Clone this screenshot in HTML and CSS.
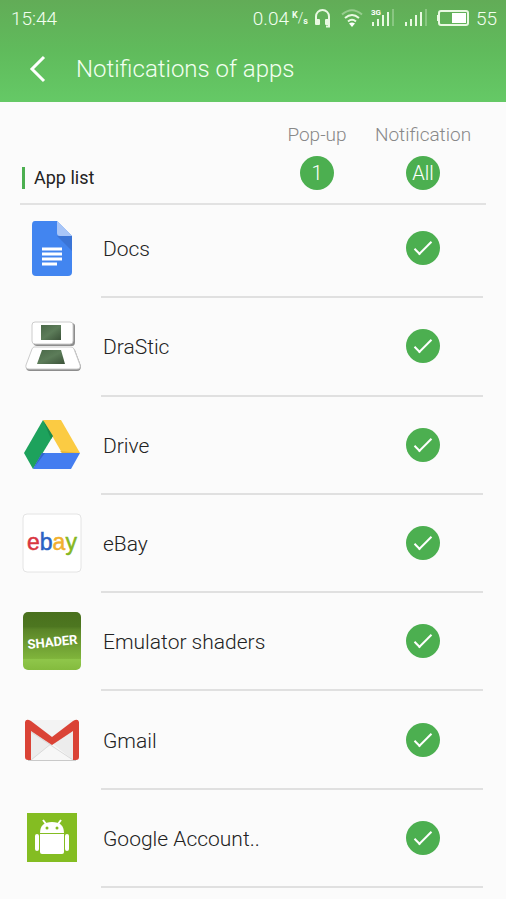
FILE: index.html
```html
<!DOCTYPE html>
<html lang="en">
<head>
    <meta charset="UTF-8">
    <meta name="viewport" content="width=device-width, initial-scale=1.0">
    <title>Notifications of apps</title>
    <link rel="stylesheet" href="styles.css">
</head>
<body>

    <header class="top">
        <!-- Status bar -->
        <div class="status-bar">
            <span class="clock">15:44</span>
            <div class="status-icons">
                <span class="speed">0.04</span>
                <span class="unit"><sup>K</sup><span>/</span><sub>s</sub></span>
                <svg class="headset" width="17" height="20" viewBox="0 0 17 20">
                    <path d="M2 13V8.500a6.500 6.500 0 0 1 13 0V13M15 15v3.500h-3" fill="none" stroke="#e9f9e2" stroke-width="2"/>
                    <rect x="1" y="11" width="5" height="6" rx="1" fill="#e9f9e2"/>
                    <rect x="11" y="11" width="5" height="6" rx="1" fill="#e9f9e2"/>
                </svg>
                <svg class="wifi" width="22" height="20" viewBox="0 0 22 20">
                    <g fill="none" stroke="#e9f9e2" stroke-width="2">
                        <path d="M1 6.500Q11-2 21 6.500" opacity=".4"/>
                        <path d="M4 10Q11 4 18 10"/>
                        <path d="M7 13.500Q11 10 15 13.500"/>
                    </g>
                    <path d="M8 15.500Q11 13.500 14 15.500L11 19z" fill="#fff"/>
                </svg>
                <svg class="signal" width="24" height="20" viewBox="0 0 24 20">
                    <text x="0" y="7" class="signal-text">3G</text>
                    <g fill="#e9f9e2">
                        <rect x="1" y="14" width="2" height="4"/>
                        <rect x="6" y="11" width="2" height="7"/>
                        <rect x="11" y="7" width="2" height="11"/>
                        <rect x="16" y="4" width="2" height="14"/>
                        <rect x="21" y="1" width="2" height="17" opacity=".3"/>
                    </g>
                </svg>
                <svg class="signal" width="24" height="20" viewBox="0 0 24 20">
                    <g fill="#e9f9e2">
                        <rect x="1" y="14" width="2" height="4"/>
                        <rect x="6" y="11" width="2" height="7"/>
                        <rect x="11" y="7" width="2" height="11"/>
                        <rect x="16" y="4" width="2" height="14"/>
                        <rect x="21" y="1" width="2" height="17" opacity=".3"/>
                    </g>
                </svg>
                <svg class="battery" width="32" height="18" viewBox="0 0 32 18">
                    <rect x="2" y="2" width="29" height="14" rx="2" fill="none" stroke="#e9f9e2" stroke-width="2"/>
                    <rect x="0" y="6" width="2" height="6" fill="#e9f9e2"/>
                    <rect x="15" y="4" width="14" height="10" fill="#fff"/>
                </svg>
                <span class="level">55</span>
            </div>
        </div>

        <!-- Title bar -->
        <div class="title-bar">
            <button class="back" type="button" aria-label="Back">
                <svg width="18" height="28" viewBox="0 0 18 28">
                    <path d="M15 2L3 14l12 12" fill="none" stroke="#fff" stroke-width="3"/>
                </svg>
            </button>
            <h1>Notifications of apps</h1>
        </div>
    </header>

    <main class="content">
        <div class="list-header">
            <h2>App list</h2>
            <div class="column">
                <span>Pop-up</span>
                <button class="round" type="button">1</button>
            </div>
            <div class="column">
                <span>Notification</span>
                <button class="round" type="button">All</button>
            </div>
        </div>

        <ul class="app-list">
            <li class="app">
                <svg class="app-icon" viewBox="0 0 60 60">
                    <path d="M13 3h22l15 15v36q0 4-4 4H14q-4 0-4-4V7q0-4 3-4z" fill="#4285f0"/>
                    <path d="M35 18h15v15z" fill="#3a74d6"/>
                    <path d="M35 3l15 15H38q-3 0-3-3z" fill="#a8c5f7"/>
                    <path d="M20 31h20M20 36h20M20 41h20M20 46h15" stroke="#fff" stroke-width="3"/>
                </svg>
                <label class="app-name" for="docs">Docs</label>
                <input class="check" type="checkbox" id="docs" checked>
            </li>
            <li class="app">
                <svg class="app-icon" viewBox="0 0 60 60">
                    <defs>
                        <linearGradient id="screen" x1="0" y1="0" x2="1" y2="1">
                            <stop offset="0" stop-color="#4a6848"/>
                            <stop offset=".5" stop-color="#5c7c59"/>
                            <stop offset="1" stop-color="#3b5239"/>
                        </linearGradient>
                    </defs>
                    <path d="M13 7h36q4 0 4 3v16q0 4-3 4H15q-3 0-4-3z" fill="#8d8d8d"/>
                    <rect x="10" y="6" width="41" height="22" rx="3" fill="#fff" stroke="#ccc"/>
                    <path d="M12 32h38q2 0 3 2l6 16q0 5-4 5H8q-4 0-4-4z" fill="#8d8d8d"/>
                    <path d="M12 31h37q2 0 3 2l6 16q1 4-3 4H7q-4 0-3-4l6-16q1-2 2-2z" fill="#fff" stroke="#ccc"/>
                    <rect x="19" y="9" width="20" height="15" fill="url(#screen)"/>
                    <path d="M20 34h19l4 14H15z" fill="url(#screen)"/>
                </svg>
                <label class="app-name" for="drastic">DraStic</label>
                <input class="check" type="checkbox" id="drastic" checked>
            </li>
            <li class="app">
                <svg class="app-icon" viewBox="0 0 60 60">
                    <path d="M21 5L2 38l9 16 20-33z" fill="#1da25c"/>
                    <path d="M21 5h18l19 33H40z" fill="#fbcb43"/>
                    <path d="M20 38h38l-9 16H11z" fill="#447df0"/>
                    <path d="M20 38h3L11 54z" fill="#3267cc"/>
                    <path d="M21 5l10 16-2 3z" fill="#198a4e"/>
                    <path d="M40 38h18L38 36z" fill="#e5b53a"/>
                </svg>
                <label class="app-name" for="drive">Drive</label>
                <input class="check" type="checkbox" id="drive" checked>
            </li>
            <li class="app">
                <svg class="app-icon" viewBox="0 0 60 60">
                    <rect x="1" y="1" width="58" height="58" rx="4" fill="#fff" stroke="#e4e4e4"/>
                    <text x="5" y="37" class="ebay"><tspan fill="#d9363f" stroke="#d9363f">e</tspan><tspan fill="#2a62c4" stroke="#2a62c4">b</tspan><tspan fill="#f2b02e" stroke="#f2b02e">a</tspan><tspan fill="#86b71f" stroke="#86b71f">y</tspan></text>
                </svg>
                <label class="app-name" for="ebay">eBay</label>
                <input class="check" type="checkbox" id="ebay" checked>
            </li>
            <li class="app">
                <svg class="app-icon" viewBox="0 0 60 60">
                    <defs>
                        <linearGradient id="shade" x1="0" y1="0" x2="0" y2="1">
                            <stop offset="0" stop-color="#49701d"/>
                            <stop offset=".25" stop-color="#4d7620"/>
                            <stop offset=".3" stop-color="#5a8428"/>
                            <stop offset=".8" stop-color="#7fb43b"/>
                            <stop offset=".82" stop-color="#8fc64a"/>
                            <stop offset="1" stop-color="#84bb3e"/>
                        </linearGradient>
                    </defs>
                    <rect x="1" y="1" width="58" height="58" rx="5" fill="url(#shade)"/>
                    <text x="6" y="38" class="shader" transform="rotate(-6 6 38)">SHADER</text>
                </svg>
                <label class="app-name" for="shaders">Emulator shaders</label>
                <input class="check" type="checkbox" id="shaders" checked>
            </li>
            <li class="app">
                <svg class="app-icon" viewBox="0 0 60 60">
                    <path d="M6 10h48v41H6z" fill="#c9c9c9"/>
                    <path d="M6 10h48v40H6z" fill="#ececec"/>
                    <path d="M9 50l21-17 21 17z" fill="#f7f7f7"/>
                    <path d="M9 50l21-17M9 22l42 28" fill="none" stroke="#dadada"/>
                    <path d="M6 10h48L30 27z" fill="#f3f3f3"/>
                    <path d="M3 12q1-4 6-1l21 16 21-16q5-3 6 1v35q0 3-3 3h-3V21L30 35 9 21v29H6q-3 0-3-3z" fill="#da4336"/>
                </svg>
                <label class="app-name" for="gmail">Gmail</label>
                <input class="check" type="checkbox" id="gmail" checked>
            </li>
            <li class="app">
                <svg class="app-icon" viewBox="0 0 60 60">
                    <rect x="5" y="5" width="50" height="49" fill="#84bd22"/>
                    <path d="M18 25q0-11 12-11t12 11z" fill="#fff"/>
                    <path d="M24 16l-3-4M36 16l3-4" stroke="#fff" stroke-width="2"/>
                    <circle cx="25" cy="20" r="1.500" fill="#84bd22"/>
                    <circle cx="35" cy="20" r="1.500" fill="#84bd22"/>
                    <path d="M18 26h24v18q0 2-2 2H20q-2 0-2-2z" fill="#fff"/>
                    <rect x="13" y="26" width="4" height="17" rx="2" fill="#fff"/>
                    <rect x="43" y="26" width="4" height="17" rx="2" fill="#fff"/>
                </svg>
                <label class="app-name" for="account">Google Account..</label>
                <input class="check" type="checkbox" id="account" checked>
            </li>
        </ul>
    </main>

</body>
</html>
```

FILE: styles.css
```css
* {
    box-sizing: border-box;
}

body {
    display: flex;
    flex-direction: column;
    min-height: 100vh;
    margin: 0;
    font-family: Roboto, "Noto Sans", sans-serif;
    font-weight: 300;
    color: #222;
    background-color: #fbfbfb;
}

button {
    padding: 0;
    border: 0;
    font: inherit;
    cursor: pointer;
}

/* Green top area */
.top {
    color: #f2fff0;
    background: linear-gradient(#62ac57, #60bb5c 50%, #65c966);
}

.status-bar {
    display: flex;
    justify-content: space-between;
    align-items: center;
    height: 36px;
    padding: 0 9px 0 11px;
    font-size: 19px;
}

.status-icons {
    display: flex;
    align-items: center;
}

.unit {
    display: flex;
    align-items: center;
    margin: 0 6px 0 3px;
    font-size: 14px;
    line-height: 16px;
}

.unit sup,
.unit sub {
    font-size: 9px;
    font-weight: 700;
    line-height: 10px;
}

.unit sup {
    align-self: flex-start;
}

.unit sub {
    align-self: flex-end;
}

.wifi {
    margin: 0 8px 0 10px;
}

.signal {
    margin-right: 9px;
}

.signal-text {
    font-size: 8px;
    font-weight: 700;
    fill: #fff;
}

.battery {
    margin-right: 7px;
}

.title-bar {
    display: flex;
    align-items: center;
    height: 66px;
    padding: 0 29px;
}

.back {
    display: flex;
    margin-right: 29px;
    color: inherit;
    background: none;
}

h1 {
    margin: 0;
    font-size: 24px;
    font-weight: 300;
}

/* List */
.content {
    display: flex;
    flex: 1;
    flex-direction: column;
    padding: 0 20px 11px;
}

.list-header {
    display: grid;
    grid-template-columns: 1fr 106px 106px;
    align-items: end;
    padding: 21px 10px 13px 2px;
    border-bottom: 2px solid #e2e2e2;
}

h2 {
    margin: 0 0 1px;
    padding-left: 9px;
    border-left: 3px solid #4caf50;
    font-size: 18px;
    font-weight: 400;
    line-height: 22px;
}

.column {
    display: flex;
    flex-direction: column;
    align-items: center;
    gap: 9px;
    font-size: 19px;
    line-height: 24px;
    color: #888;
}

.round {
    width: 34px;
    height: 34px;
    border-radius: 50%;
    font-size: 20px;
    color: #fff;
    background-color: #4caf50;
}

.app-list {
    display: grid;
    flex: 1;
    grid-auto-rows: 1fr;
    margin: -5px 3px 0 2px;
    padding: 0;
    list-style: none;
}

.app {
    display: grid;
    grid-template-rows: 1fr 2px;
    grid-template-columns: 60px 1fr 106px;
    align-items: center;
    column-gap: 19px;
    min-height: 96px;
}

/* The divider runs under the name and the tick only */
.app::after {
    content: "";
    grid-column: 2 / 4;
    height: 2px;
    background-color: #e0e0e0;
}

.app-icon {
    width: 60px;
    height: 60px;
}

.app-name {
    padding: 2px 0 0 2px;
    font-size: 21px;
}

.check {
    display: grid;
    place-items: center;
    width: 34px;
    height: 34px;
    margin: 0 0 0 29px;
    border-radius: 50%;
    appearance: none;
    background-color: #ccc;
    cursor: pointer;
}

.check:checked {
    background-color: #4caf50;
}

.check:checked::before {
    content: "";
    box-sizing: border-box;
    width: 18px;
    height: 8px;
    margin-bottom: 4px;
    border-bottom: 2px solid #fff;
    border-left: 2px solid #fff;
    transform: rotate(-45deg);
}

.ebay {
    font-family: "Liberation Sans", Arial, sans-serif;
    font-size: 23px;
    stroke-width: 0.5px;
}

.shader {
    font-size: 13px;
    font-weight: 700;
    fill: #fff;
}
```
